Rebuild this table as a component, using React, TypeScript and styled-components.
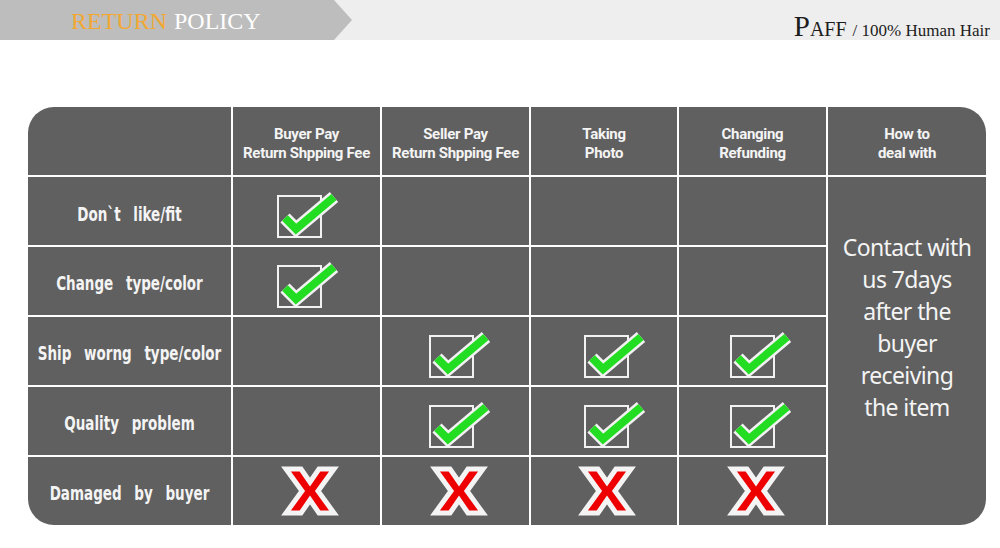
import * as React from "react";
import styled, { createGlobalStyle } from "styled-components";

const GlobalStyle = createGlobalStyle`
  html, body {
    margin: 0;
    padding: 0;
    background: #ffffff;
  }
`;

const SPage = styled.div`
  width: 1000px;
  height: 548px;
  overflow: hidden;
  background: #ffffff;
`;

const STopBar = styled.div`
  height: 40px;
  background: #eeeeee;
  display: flex;
  align-items: center;
  justify-content: space-between;
`;

const SBanner = styled.div`
  width: 352px;
  height: 40px;
  background: #bdbdbd;
  clip-path: polygon(0 0, 334px 0, 352px 20px, 334px 40px, 0 40px);
  display: flex;
  align-items: center;
  padding-left: 71px;
  padding-top: 2px;
  box-sizing: border-box;
  font-family: "Liberation Serif", serif;
  font-size: 24px;
  color: #ffffff;
`;

const SOrange = styled.span`
  color: #f2a833;
  margin-right: 7px;
`;

const SBrand = styled.div`
  font-family: "Liberation Serif", serif;
  color: #1c1c1c;
  font-size: 17px;
  padding-right: 10px;
  padding-top: 12px;
  display: flex;
  align-items: baseline;
`;

const SBrandBig = styled.span`
  font-size: 29px;
`;

const SBrandCaps = styled.span`
  font-size: 20px;
  margin-right: 6px;
`;

const STableWrap = styled.div`
  padding: 67px 0 0 28px;
`;

const STable = styled.div`
  width: 958px;
  display: grid;
  grid-template-columns: 203px 147px 147px 146px 147px 158px;
  grid-template-rows: repeat(6, 68px);
  gap: 2px;
  background: #ffffff;
  border-radius: 26px;
  overflow: hidden;
`;

const SCell = styled.div<{ $span?: number }>`
  background: #606060;
  display: flex;
  align-items: center;
  justify-content: center;
  ${({ $span }) => ($span ? `grid-row: span ${$span};` : "")}
`;

const SHeadText = styled.div`
  font-family: Roboto, "Liberation Sans", sans-serif;
  font-weight: 700;
  font-size: 15px;
  line-height: 19px;
  letter-spacing: -0.3px;
  color: #f4f4f4;
  text-align: center;
  padding-top: 6px;
`;

const SRowLabel = styled.div`
  font-family: "DejaVu Sans Condensed", "Liberation Sans", sans-serif;
  font-weight: 700;
  font-size: 15px;
  color: #f4f4f4;
  word-spacing: 8px;
  letter-spacing: 0px;
  white-space: nowrap;
  margin-top: 5px;
  transform: scale(1, 1.3);
`;

const SContact = styled.div`
  font-family: "Noto Sans", "Open Sans", sans-serif;
  font-size: 23px;
  line-height: 32px;
  letter-spacing: -0.6px;
  color: #f4f4f4;
  text-align: center;
  padding-bottom: 48px;
`;

const SMark = styled.svg<{ $dx: number }>`
  display: block;
  margin-left: ${({ $dx }) => $dx}px;
`;

const Check = ({ dx }: { dx: number }) => (
  <SMark $dx={dx} width="66" height="52" viewBox="0 0 66 52" style={{ marginTop: 4 }}>
    <rect x="2" y="9" width="43" height="41" fill="none" stroke="#f2f2f2" strokeWidth="2" />
    <polyline
      points="9,31 20,42 58,10"
      fill="none"
      stroke="#f2f2f2"
      strokeWidth="13"
      strokeLinejoin="miter"
    />
    <polyline
      points="9,31 20,42 58,10"
      fill="none"
      stroke="#22dd22"
      strokeWidth="8"
      strokeLinejoin="miter"
    />
  </SMark>
);

const Cross = () => (
  <SMark $dx={6} width="60" height="52" viewBox="0 0 60 52">
    <polygon
      points="6,4 21,4 30,17 39,4 54,4 38,26 54,48 39,48 30,35 21,48 6,48 22,26"
      fill="#ee0000"
      stroke="#f4f4f4"
      strokeWidth="5"
      strokeLinejoin="miter"
    />
  </SMark>
);

type Mark = "check" | "cross" | "";

// nudges so each column's checkbox sits where the original has it
const checkShift = [4, 10, 24, 18];

const rows: { label: string; marks: Mark[] }[] = [
  { label: "Don`t like/fit", marks: ["check", "", "", ""] },
  { label: "Change type/color", marks: ["check", "", "", ""] },
  { label: "Ship worng type/color", marks: ["", "check", "check", "check"] },
  { label: "Quality problem", marks: ["", "check", "check", "check"] },
  { label: "Damaged by buyer", marks: ["cross", "cross", "cross", "cross"] },
];

const heads = [
  ["Buyer Pay", "Return Shpping Fee"],
  ["Seller Pay", "Return Shpping Fee"],
  ["Taking", "Photo"],
  ["Changing", "Refunding"],
  ["How to", "deal with"],
];

const App = () => (
  <SPage>
    <GlobalStyle />
    <STopBar>
      <SBanner>
        <SOrange>RETURN</SOrange>POLICY
      </SBanner>
      <SBrand>
        <SBrandBig>P</SBrandBig>
        <SBrandCaps>AFF</SBrandCaps>/ 100% Human Hair
      </SBrand>
    </STopBar>
    <STableWrap>
      <STable>
        <SCell />
        {heads.map((h) => (
          <SCell key={h[0]}>
            <SHeadText>
              {h[0]}
              <br />
              {h[1]}
            </SHeadText>
          </SCell>
        ))}
        {rows.map((r, i) => (
          <React.Fragment key={r.label}>
            <SCell>
              <SRowLabel>{r.label}</SRowLabel>
            </SCell>
            {r.marks.map((m, j) => (
              <SCell key={j}>
                {m === "check" && <Check dx={checkShift[j]} />}
                {m === "cross" && <Cross />}
              </SCell>
            ))}
            {i === 0 && (
              <SCell $span={5}>
                <SContact>
                  Contact with
                  <br />
                  us 7days
                  <br />
                  after the
                  <br />
                  buyer
                  <br />
                  receiving
                  <br />
                  the item
                </SContact>
              </SCell>
            )}
          </React.Fragment>
        ))}
      </STable>
    </STableWrap>
  </SPage>
);

export default App;
